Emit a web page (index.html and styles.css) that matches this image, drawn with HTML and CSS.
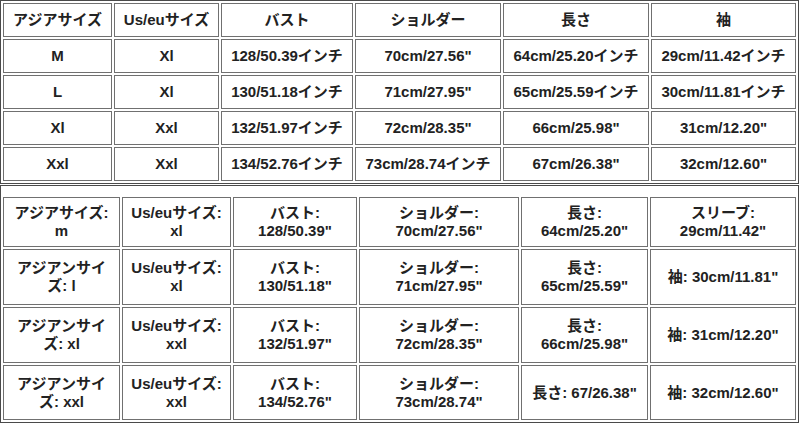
FILE: index.html
```html
<!DOCTYPE html>
<html lang="ja">
<head>
<meta charset="utf-8">
<link rel="stylesheet" href="styles.css">
</head>
<body>
<table class="size-table top">
  <tr class="row">
    <td class="c1">アジアサイズ</td>
    <td class="c2">Us/euサイズ</td>
    <td class="c3">バスト</td>
    <td class="c4">ショルダー</td>
    <td class="c5">長さ</td>
    <td class="c6">袖</td>
  </tr>
  <tr class="row">
    <td>M</td><td>Xl</td><td>128/50.39インチ</td><td>70cm/27.56"</td><td>64cm/25.20インチ</td><td>29cm/11.42インチ</td>
  </tr>
  <tr class="row">
    <td>L</td><td>Xl</td><td>130/51.18インチ</td><td>71cm/27.95"</td><td>65cm/25.59インチ</td><td>30cm/11.81インチ</td>
  </tr>
  <tr class="row">
    <td>Xl</td><td>Xxl</td><td>132/51.97インチ</td><td>72cm/28.35"</td><td>66cm/25.98"</td><td>31cm/12.20"</td>
  </tr>
  <tr class="row">
    <td>Xxl</td><td>Xxl</td><td>134/52.76インチ</td><td>73cm/28.74インチ</td><td>67cm/26.38"</td><td>32cm/12.60"</td>
  </tr>
</table>
<table class="size-table bottom">
  <tr class="row r1">
    <td class="b1">アジアサイズ:<br>m</td>
    <td class="b2">Us/euサイズ:<br>xl</td>
    <td class="b3">バスト:<br>128/50.39"</td>
    <td class="b4">ショルダー:<br>70cm/27.56"</td>
    <td class="b5">長さ:<br>64cm/25.20"</td>
    <td class="b6">スリーブ:<br>29cm/11.42"</td>
  </tr>
  <tr class="row r2">
    <td>アジアンサイ<br>ズ: l</td>
    <td>Us/euサイズ:<br>xl</td>
    <td>バスト:<br>130/51.18"</td>
    <td>ショルダー:<br>71cm/27.95"</td>
    <td>長さ:<br>65cm/25.59"</td>
    <td>袖: 30cm/11.81"</td>
  </tr>
  <tr class="row r2">
    <td>アジアンサイ<br>ズ: xl</td>
    <td>Us/euサイズ:<br>xxl</td>
    <td>バスト:<br>132/51.97"</td>
    <td>ショルダー:<br>72cm/28.35"</td>
    <td>長さ:<br>66cm/25.98"</td>
    <td>袖: 31cm/12.20"</td>
  </tr>
  <tr class="row r4">
    <td>アジアンサイ<br>ズ: xxl</td>
    <td>Us/euサイズ:<br>xxl</td>
    <td>バスト:<br>134/52.76"</td>
    <td>ショルダー:<br>73cm/28.74"</td>
    <td>長さ: 67/26.38"</td>
    <td>袖: 32cm/12.60"</td>
  </tr>
</table>
</body>
</html>
```
FILE: styles.css
```css
html, body {
  margin: 0;
  padding: 0;
  background: #ffffff;
}
body {
  font-family: "Liberation Sans", Arial, "Noto Sans CJK JP", sans-serif;
  font-size: 15px;
  font-weight: bold;
  color: #222222;
}
.size-table {
  box-sizing: border-box;
  width: 799px;
  table-layout: fixed;
  border-collapse: separate;
  border-spacing: 2px;
  border: 1px solid #4a4a4a;
}
.size-table td {
  box-sizing: border-box;
  border: 1px solid #707070;
  padding: 0 2px;
  text-align: center;
  vertical-align: middle;
  white-space: nowrap;
  overflow: hidden;
}
.top .row td {
  height: 34px;
  line-height: 18px;
}
.top .c1 { width: 109px; }
.top .c2 { width: 105px; }
.top .c3 { width: 132px; }
.top .c4 { width: 146px; }
.top .c5 { width: 146px; }
.top .c6 { width: 145px; }

.bottom {
  margin-top: 1px;
  padding-top: 9px;
}
.bottom td {
  line-height: 18px;
}
.bottom .r1 td { height: 50px; }
.bottom .r2 td { height: 56px; }
.bottom .r4 td { height: 55px; }
.bottom .b1 { width: 117px; }
.bottom .b2 { width: 109px; }
.bottom .b3 { width: 124px; }
.bottom .b4 { width: 160px; }
.bottom .b5 { width: 127px; }
.bottom .b6 { width: 146px; }
```
